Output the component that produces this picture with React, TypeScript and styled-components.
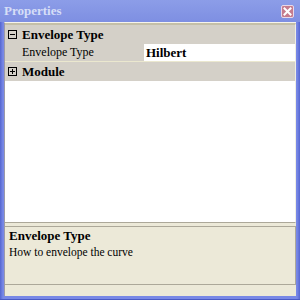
import { createGlobalStyle, styled } from 'styled-components';

const GlobalStyle = createGlobalStyle`
  html, body {
    margin: 0;
    padding: 0;
  }
  body {
    font-family: 'Liberation Serif', 'Times New Roman', serif;
    font-size: 13px;
    color: #000;
  }
`;

export default function App() {
  return (
    <>
      <GlobalStyle />
      <Window>
        <TitleBar>
          <Title>Properties</Title>
          <CloseButton aria-label="close">
            <svg width="13" height="13" viewBox="0 0 13 13">
              <rect x="0.5" y="0.5" width="12" height="12" rx="1.5" fill="#c57c8e" stroke="#e8d8e8" />
              <path d="M3.5 3.5 L9.5 9.5 M9.5 3.5 L3.5 9.5" stroke="#fff" strokeWidth="2" strokeLinecap="square" />
            </svg>
          </CloseButton>
        </TitleBar>
        <Frame>
          <Body>
            <Grid>
              <CategoryRow>
                <Expander open />
                <CategoryLabel>Envelope Type</CategoryLabel>
              </CategoryRow>
              <PropertyRow>
                <PropertyName>Envelope Type</PropertyName>
                <PropertyValue>Hilbert</PropertyValue>
              </PropertyRow>
              <CategoryRow>
                <Expander />
                <CategoryLabel>Module</CategoryLabel>
              </CategoryRow>
            </Grid>
            <Splitter />
            <Help>
              <HelpTitle>Envelope Type</HelpTitle>
              <HelpText>How to envelope the curve</HelpText>
            </Help>
          </Body>
        </Frame>
      </Window>
    </>
  );
}

function Expander({ open = false }: { open?: boolean }) {
  return (
    <ExpanderBox width="9" height="9" viewBox="0 0 9 9">
      <rect x="0.5" y="0.5" width="8" height="8" fill="none" stroke="#000" />
      <path d="M2 4.5 H7" stroke="#000" />
      {!open && <path d="M4.5 2 V7" stroke="#000" />}
    </ExpanderBox>
  );
}

const Window = styled.div`
  width: 300px;
  height: 300px;
  display: flex;
  flex-direction: column;
  background: #6a7bdc;
`;

const TitleBar = styled.div`
  height: 22px;
  flex: none;
  display: flex;
  align-items: center;
  justify-content: space-between;
  padding: 0 6px 0 4px;
  box-sizing: border-box;
  background: linear-gradient(#8c9de8, #7e8fe2);
`;

const Title = styled.span`
  font-weight: bold;
  font-size: 13px;
  color: #d6def7;
  line-height: 22px;
`;

const CloseButton = styled.div`
  width: 13px;
  height: 13px;
  display: flex;
`;

const Frame = styled.div`
  flex: 1;
  display: flex;
  padding: 0 4px 4px 4px;
  background: linear-gradient(90deg, #5566d0 0, #7888e6 3px, #7888e6 calc(100% - 3px), #5566d0 100%);
  box-shadow: inset 0 -1px 0 #4a5ac4;
`;

const Body = styled.div`
  flex: 1;
  display: flex;
  flex-direction: column;
  background: #ece9d8;
  border-left: 1px solid #9c9aa8;
  border-top: 1px solid #f6f4ec;
`;

const Grid = styled.div`
  height: 200px;
  flex: none;
  box-sizing: border-box;
  background: #fff;
  border-top: 2px solid #c4bfa8;
  border-bottom: 1px solid #aca899;
  border-right: 1px solid #f0eee4;
`;

const CategoryRow = styled.div`
  height: 19px;
  display: flex;
  align-items: center;
  gap: 5px;
  padding-left: 3px;
  background: #d4d0c8;
`;

const ExpanderBox = styled.svg`
  flex: none;
  display: block;
`;

const CategoryLabel = styled.span`
  font-weight: bold;
  font-size: 13px;
  line-height: 19px;
`;

const PropertyRow = styled.div`
  height: 18px;
  display: flex;
  box-sizing: border-box;
  border-bottom: 1px solid #ebe8cf;
`;

const PropertyName = styled.div`
  width: 139px;
  flex: none;
  padding-left: 17px;
  box-sizing: border-box;
  background: #d4d0c8;
  font-size: 12px;
  line-height: 17px;
`;

const PropertyValue = styled.div`
  flex: 1;
  padding-left: 2px;
  background: #fff;
  font-weight: bold;
  font-size: 13px;
  line-height: 17px;
`;

const Splitter = styled.div`
  height: 3px;
  flex: none;
`;

const Help = styled.div`
  height: 59px;
  flex: none;
  box-sizing: border-box;
  padding: 1px 4px 0 4px;
  border-top: 1px solid #aca899;
  border-bottom: 1px solid #aca899;
  border-right: 1px solid #aca899;
`;

const HelpTitle = styled.div`
  font-weight: bold;
  font-size: 13px;
  line-height: 15px;
`;

const HelpText = styled.div`
  margin-top: 2px;
  font-size: 11.5px;
  line-height: 15px;
`;
